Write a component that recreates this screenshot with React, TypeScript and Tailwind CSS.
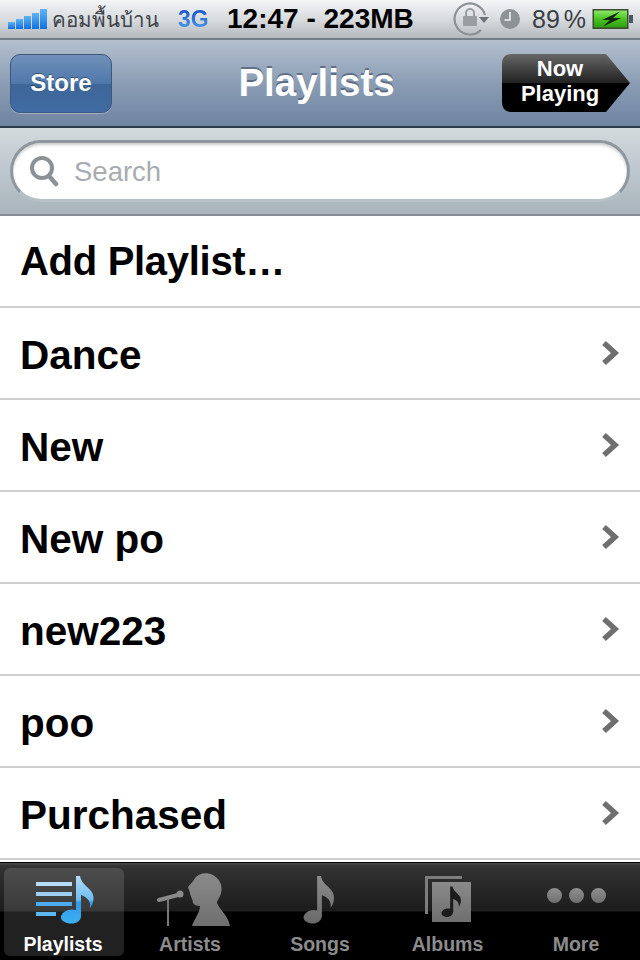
import React from "react";

const rows = ["Dance", "New", "New po", "new223", "poo", "Purchased"];

function Chevron() {
  return (
    <svg width="20" height="28" viewBox="0 0 20 28" className="shrink-0">
      <path d="M4 4 L15 14 L4 24" fill="none" stroke="#6f6f6f" strokeWidth="5.5" />
    </svg>
  );
}

function SignalBars() {
  const heights = [7, 10, 13, 16, 20];
  return (
    <div className="flex items-end gap-[1px] h-[20px]">
      {heights.map((h, i) => (
        <div key={i} className="w-[7px] bg-gradient-to-b from-[#5fb4f5] to-[#0b6fe0]" style={{ height: h }} />
      ))}
    </div>
  );
}

function Rotation() {
  return (
    <svg width="36" height="34" viewBox="0 0 36 34">
      <path d="M32 13 A15.5 15.5 0 1 0 28 28" fill="none" stroke="#8b9094" strokeWidth="2.2" />
      <path d="M26 15 L36 15 L31 21 Z" fill="#6d7276" />
      <rect x="10" y="14" width="14" height="10" rx="1" fill="#9a9ea2" />
      <path d="M13 14 V11 A4 4 0 0 1 21 11 V14" fill="none" stroke="#9a9ea2" strokeWidth="2" />
    </svg>
  );
}

function Clock() {
  return (
    <svg width="22" height="22" viewBox="0 0 22 22">
      <circle cx="11" cy="11" r="10" fill="#8d9296" />
      <path d="M11 4 V12 H5.5" fill="none" stroke="#f1f2f3" strokeWidth="1.6" />
    </svg>
  );
}

function Battery() {
  return (
    <svg width="42" height="22" viewBox="0 0 42 22">
      <defs>
        <linearGradient id="bat" x1="0" y1="0" x2="0" y2="1">
          <stop offset="0" stopColor="#8fe66a" />
          <stop offset="0.5" stopColor="#49c41f" />
          <stop offset="1" stopColor="#2f9d12" />
        </linearGradient>
      </defs>
      <rect x="0.5" y="1" width="36" height="20" fill="#3c4a32" />
      <rect x="2" y="2.5" width="33" height="17" fill="url(#bat)" />
      <rect x="37" y="7" width="4" height="8" fill="#4c5660" />
      <path d="M28 3.5 L10 12 L18 12 L11 18.5 L29 10 L21 10 Z" fill="#10240a" />
    </svg>
  );
}

function PlaylistIcon() {
  return (
    <svg width="60" height="50" viewBox="0 0 60 50">
      <defs>
        <linearGradient id="pl" x1="0" y1="0" x2="0" y2="1">
          <stop offset="0" stopColor="#b6dcf8" />
          <stop offset="0.5" stopColor="#6cbcf3" />
          <stop offset="0.56" stopColor="#2f9bea" />
          <stop offset="1" stopColor="#3fb0f2" />
        </linearGradient>
      </defs>
      <rect x="0" y="7" width="36" height="4" fill="#b6dcf8" />
      <rect x="0" y="17" width="36" height="4" fill="#9fd0f3" />
      <rect x="0" y="27" width="36" height="4" fill="#4eaaef" />
      <rect x="0" y="37" width="20" height="4" fill="#5ab7f2" />
      <path
        d="M40 1 L44 1 C45 8 51 11 55 16 C59 21 58 28 54 33 C55 26 51 22 45 20 L45 41 C45 47 38 50 31 48 C24 46 23 41 28 37 C32 34 37 34 40 35 Z"
        fill="url(#pl)"
      />
    </svg>
  );
}

function ArtistIcon() {
  return (
    <svg width="74" height="54" viewBox="0 0 74 54">
      <defs>
        <linearGradient id="gr1" x1="0" y1="0" x2="0" y2="1">
          <stop offset="0" stopColor="#8a8a8a" />
          <stop offset="1" stopColor="#6f6f6f" />
        </linearGradient>
      </defs>
      <path d="M2 28 L21 23" stroke="#8a8a8a" strokeWidth="4" fill="none" strokeLinecap="round" />
      <circle cx="23" cy="22" r="3.5" fill="#8a8a8a" />
      <rect x="10" y="27" width="2" height="27" fill="#777" />
      <path
        d="M38 6 C42 1 50 0 56 3 C63 7 66 14 64 21 C63 26 60 28 60 31 C62 37 71 43 73 54 L35 54 C37 47 43 41 43 34 C40 34 37 33 36 31 C36 27 33 24 33 21 L31 15 C33 12 36 10 38 6 Z"
        fill="url(#gr1)"
      />
    </svg>
  );
}

function SongIcon() {
  return (
    <svg width="36" height="50" viewBox="0 0 36 52">
      <defs>
        <linearGradient id="gr2" x1="0" y1="0" x2="0" y2="1">
          <stop offset="0" stopColor="#8c8c8c" />
          <stop offset="1" stopColor="#6a6a6a" />
        </linearGradient>
      </defs>
      <path
        d="M15 1 L19 1 C20 8 26 11 30 16 C34 21 33 29 29 34 C30 27 26 23 20 21 L20 42 C20 48 13 52 7 50 C0 48 -1 43 4 39 C8 36 12 36 15 37 Z"
        fill="url(#gr2)"
      />
    </svg>
  );
}

function AlbumIcon() {
  return (
    <div className="relative w-[48px] h-[48px]">
      <div className="absolute left-[1px] top-[1px] w-[37px] h-[38px] border-l-[3px] border-t-[3px] border-[#7d7d7d]" />
      <div className="absolute left-[8px] top-[7px] w-[39px] h-[40px] bg-gradient-to-b from-[#8a8a8a] to-[#6f6f6f] flex items-center justify-center">
        <svg width="24" height="32" viewBox="0 0 36 52">
          <path
            d="M15 1 L19 1 C20 8 26 11 30 16 C34 21 33 29 29 34 C30 27 26 23 20 21 L20 42 C20 48 13 52 7 50 C0 48 -1 43 4 39 C8 36 12 36 15 37 Z"
            fill="#1c1c1c"
          />
        </svg>
      </div>
    </div>
  );
}

function MoreIcon() {
  return (
    <div className="flex gap-[7px]">
      {[0, 1, 2].map((i) => (
        <div key={i} className="w-[15px] h-[15px] rounded-full bg-gradient-to-b from-[#8f8f8f] to-[#6f6f6f]" />
      ))}
    </div>
  );
}

function Tab({ label, active, labelClass, children }: { label: string; active?: boolean; labelClass?: string; children: React.ReactNode }) {
  return (
    <div
      className={
        "w-[120px] h-[88px] rounded-[6px] flex flex-col items-center " +
        (active ? "bg-white/[0.13] text-white" : "text-[#8c8c8c]")
      }
    >
      <div className="h-[66px] w-full flex justify-center">{children}</div>
      <div className={"text-[19.5px] font-bold leading-[24px] pt-[1px] " + (labelClass ?? "")}>{label}</div>
    </div>
  );
}

export default function App() {
  return (
    <div className="w-[640px] h-[960px] flex flex-col overflow-hidden bg-white font-['Liberation_Sans',sans-serif]">
      {/* status bar */}
      <div className="h-[40px] shrink-0 flex items-center pl-[8px] bg-gradient-to-b from-[#f3f5f7] via-[#d9dcdf] to-[#b5b9bd] border-b-2 border-[#767e85]">
        <SignalBars />
        <span className="ml-[5px] w-[105px] whitespace-nowrap text-[20.5px] leading-none text-[#3d4348] font-['Noto_Sans','DejaVu_Sans',sans-serif]">คอมพื้นบ้าน</span>
        <span className="ml-[21px] w-[30px] text-[23px] font-bold leading-none text-transparent bg-clip-text bg-gradient-to-b from-[#1d4fc4] to-[#4b9ff0]">3G</span>
        <span className="ml-[19px] w-[187px] text-[28px] font-bold leading-none text-black whitespace-nowrap">12:47 - 223MB</span>
        <div className="ml-[39px]"><Rotation /></div>
        <div className="ml-[10px]"><Clock /></div>
        <span className="ml-[11px] w-[53px] text-[25px] leading-none text-[#3a3f44] whitespace-nowrap">89<span className="text-[14px]"> </span>%</span>
        <div className="ml-[7px]"><Battery /></div>
      </div>

      {/* nav */}
      <div className="h-[88px] shrink-0 flex items-center justify-between px-[10px] border-b-2 border-[#2d3a48] bg-[linear-gradient(to_bottom,#b4c0d0,#8b9db4_50%,#6f84a3)]">
        <div className="w-[102px] h-[59px] rounded-[10px] border border-[#3d587d] flex items-center justify-center text-[24px] font-bold text-white bg-[linear-gradient(to_bottom,#7190b8,#4f78ab_50%,#3e6698_51%,#3f6ca3)] shadow-[0_1px_0_rgba(255,255,255,0.3)] [text-shadow:0_-1px_0_rgba(0,0,0,0.4)]">
          Store
        </div>
        <div className="text-[38.5px] font-bold text-white leading-none [text-shadow:0_-2px_0_rgba(60,75,100,0.6)] ml-[19px]">Playlists</div>
        <div className="w-[128px] h-[58px] flex items-center justify-center pr-[12px] pb-[4px] text-[22px] leading-[25px] font-bold text-white text-center [clip-path:path('M10_0H104L128_29L104_58H10Q0_58_0_48V10Q0_0_10_0Z')] bg-[linear-gradient(to_bottom,#666,#222_50%,#000_51%,#000)]">
          <span>Now<br />Playing</span>
        </div>
      </div>

      {/* search */}
      <div className="h-[88px] shrink-0 flex items-center px-[10px] border-b-2 border-[#858e95] bg-gradient-to-b from-[#d3dade] to-[#a9b4bc]">
        <div className="w-full h-[62px] rounded-full bg-white border-[3px] border-[#8f979e] border-b-[#b8bfc5] flex items-center pl-[16px] shadow-[inset_0_2px_3px_rgba(0,0,0,0.2)]">
          <svg width="30" height="32" viewBox="0 0 30 32" className="shrink-0">
            <circle cx="13" cy="13" r="10" fill="none" stroke="#8c9196" strokeWidth="4" />
            <path d="M20 21 L27 29" stroke="#8c9196" strokeWidth="4.5" strokeLinecap="round" />
          </svg>
          <span className="ml-[15px] pt-[2px] text-[27.5px] leading-none text-[#a8acb0]">Search</span>
        </div>
      </div>

      {/* list */}
      <div className="h-[92px] shrink-0 flex items-center pl-[20px] border-b-2 border-[#cfcfcf] text-[40px] font-bold text-black">
        <span className="tracking-[-0.3px]">Add Playlist…</span>
      </div>
      {rows.map((r) => (
        <div key={r} className="h-[92px] shrink-0 flex items-center justify-between pl-[20px] pr-[20px] border-b-2 border-[#cfcfcf] text-[40.5px] font-bold text-black">
          <span className="pt-[4px]">{r}</span>
          <Chevron />
        </div>
      ))}

      <div className="h-[2px] shrink-0 bg-white" />
      {/* tab bar */}
      <div className="flex-1 flex px-[4px] pt-[5px] gap-[8px] border-t border-black bg-[linear-gradient(to_bottom,#4a4a4a_0,#333_3px,#1c1c1c_48px,#000_49px,#000)]">
        <Tab label="Playlists" active labelClass="mr-[2px]"><div className="mt-[7px] ml-[4px]"><PlaylistIcon /></div></Tab>
        <Tab label="Artists" labelClass="mr-[4px]"><div className="mt-[4px] ml-[4px]"><ArtistIcon /></div></Tab>
        <Tab label="Songs"><div className="mt-[7px]"><SongIcon /></div></Tab>
        <Tab label="Albums" labelClass="mr-[1px]"><div className="mt-[7px]"><AlbumIcon /></div></Tab>
        <Tab label="More"><div className="mt-[20px]"><MoreIcon /></div></Tab>
      </div>
    </div>
  );
}
